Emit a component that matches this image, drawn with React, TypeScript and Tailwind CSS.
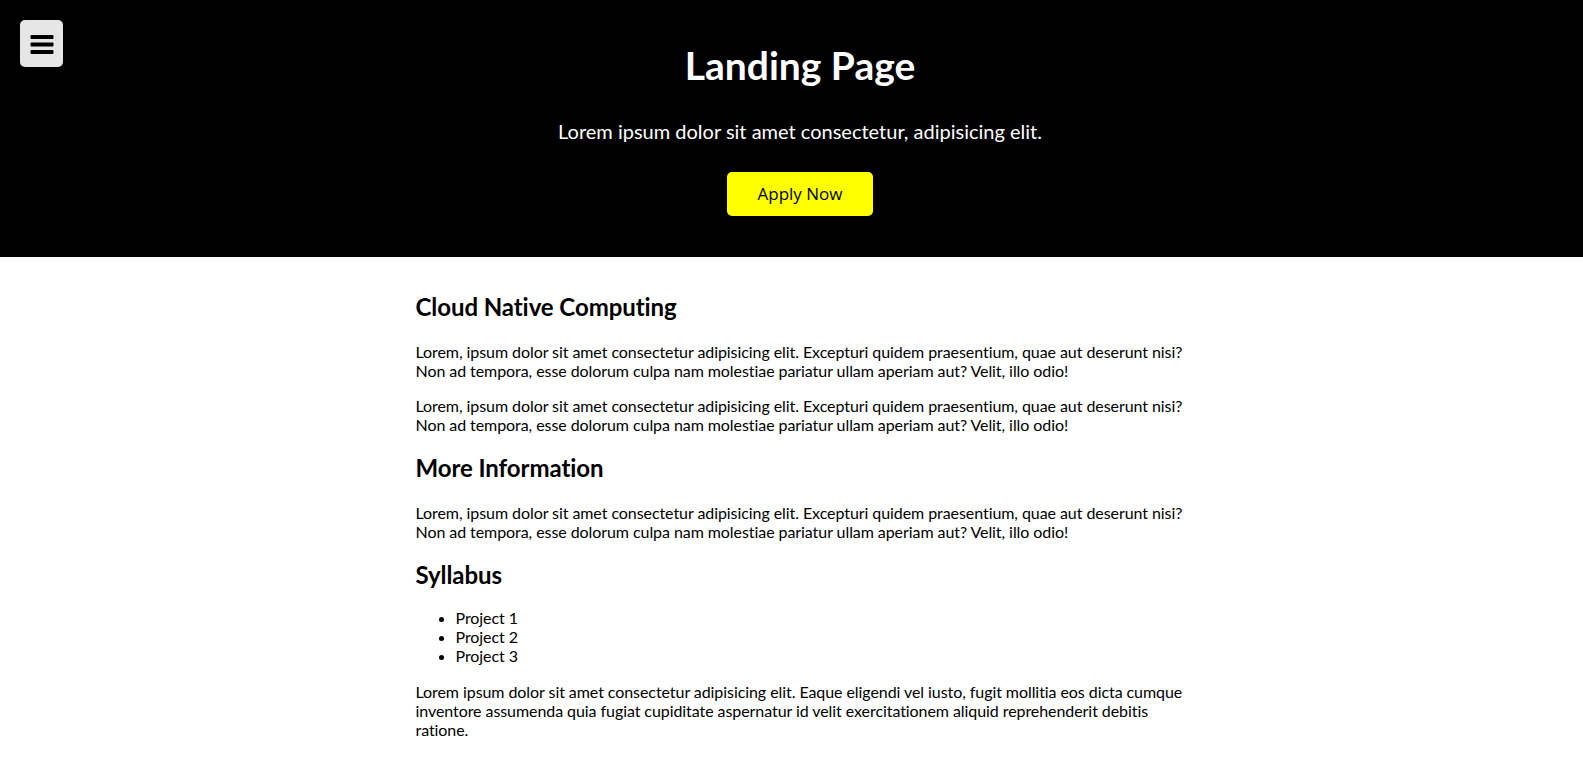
const MenuButton = () => {
  return (
    <button className="absolute left-5 top-5 w-[43px] h-[47px] rounded-[5px] bg-[#e6e6e6] flex items-center justify-center">
      <svg width="24" height="22" viewBox="0 0 24 22">
        <rect x="0.5" y="2" width="23" height="4" rx="1" fill="#000" />
        <rect x="0.5" y="9.5" width="23" height="4" rx="1" fill="#000" />
        <rect x="0.5" y="17" width="23" height="4" rx="1" fill="#000" />
      </svg>
    </button>
  );
};

const Header = () => {
  return (
    <header className="bg-black w-full pl-[17px] pt-[41px] pb-[41px] flex flex-col items-center text-white">
      <h1 className="text-[39px] leading-[48px] h-[48px] font-bold">Landing Page</h1>
      <p className="mt-[30px] text-[20px] leading-[24px]">
        Lorem ipsum dolor sit amet consectetur, adipisicing elit.
      </p>
      <button className="mt-[29px] w-[146px] h-[44px] bg-[#ffff00] text-black rounded-[5px] text-[17px] font-['Open_Sans',sans-serif]">
        Apply Now
      </button>
    </header>
  );
};

const lorem =
  "Lorem, ipsum dolor sit amet consectetur adipisicing elit. Excepturi quidem praesentium, quae aut deserunt nisi? Non ad tempora, esse dolorum culpa nam molestiae pariatur ullam aperiam aut? Velit, illo odio!";

export default function App() {
  return (
    <div className="relative min-h-screen bg-white text-black font-['Lato',sans-serif] [font-variant-ligatures:none]">
      <MenuButton />
      <Header />
      <main className="w-[800px] mx-auto pl-6 pt-4 pb-8 text-[16px] leading-[1.2] tracking-[-0.07px]">
        <h2 className="text-[24px] font-bold my-[0.83em]">Cloud Native Computing</h2>
        <p className="my-4">{lorem}</p>
        <p className="my-4">{lorem}</p>
        <h2 className="text-[24px] font-bold my-[0.83em]">More Information</h2>
        <p className="my-4">{lorem}</p>
        <h2 className="text-[24px] font-bold mt-[0.83em] mb-[18px]">Syllabus</h2>
        <ul className="list-disc pl-10 my-4">
          <li>Project 1</li>
          <li>Project 2</li>
          <li>Project 3</li>
        </ul>
        <p className="my-4">
          Lorem ipsum dolor sit amet consectetur adipisicing elit. Eaque eligendi vel iusto, fugit mollitia eos dicta
          cumque inventore assumenda quia fugiat cupiditate aspernatur id velit exercitationem aliquid reprehenderit
          debitis ratione.
        </p>
      </main>
    </div>
  );
}
